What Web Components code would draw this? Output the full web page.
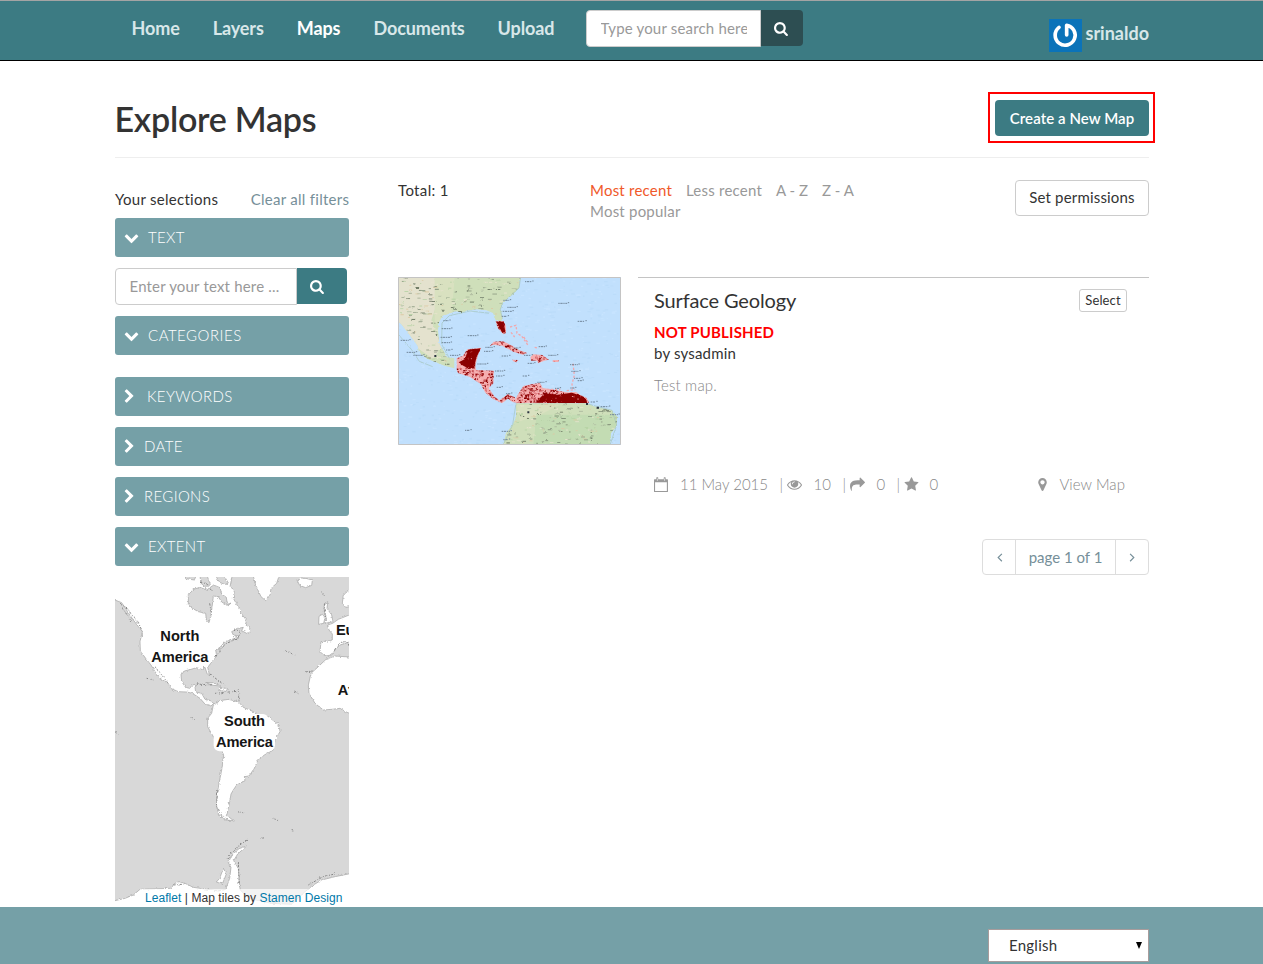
<!DOCTYPE html>
<html lang="en"><head><meta charset="utf-8"><title>Explore Maps</title>
<style>body{margin:0;background:#fff;font:15px/21px Lato,"Liberation Sans",sans-serif;color:#333;letter-spacing:.18px}</style></head>
<body><geo-app></geo-app>
<script>
const define=(name,html,after)=>customElements.define(name,class extends HTMLElement{
  connectedCallback(){
    if(this.shadowRoot)return;
    const t=document.createElement('template');
    t.innerHTML=typeof html==='function'?html(this):html;
    this.attachShadow({mode:'open'}).append(t.content.cloneNode(true));
    if(after)after(this.shadowRoot);
  }
});
const ICONS={
 search:'M1152 832q0-185-131.5-316.5t-316.5-131.5-316.5 131.5-131.5 316.5 131.5 316.5 316.5 131.5 316.5-131.5 131.5-316.5zm512 832q0 52-38 90t-90 38q-54 0-90-38l-343-342q-179 124-399 124-143 0-273.5-55.5t-225-150-150-225-55.5-273.5 55.5-273.5 150-225 225-150 273.5-55.5 273.5 55.5 225 150 150 225 55.5 273.5q0 220-124 399l343 343q37 37 37 90z',
 down:'M1683 808l-742 741q-19 19-45 19t-45-19l-742-741q-19-19-19-45.5t19-45.5l166-165q19-19 45-19t45 19l531 531 531-531q19-19 45-19t45 19l166 165q19 19 19 45.5t-19 45.5z',
 right:'M1107 877l-742 742q-19 19-45 19t-45-19l-166-166q-19-19-19-45t19-45l531-531-531-531q-19-19-19-45t19-45l166-166q19-19 45-19t45 19l742 742q19 19 19 45t-19 45z',
 eye:'M1664 960q-152-236-381-353 61 104 61 225 0 185-131.5 316.5t-316.5 131.5-316.5-131.5-131.5-316.5q0-121 61-225-229 117-381 353 133 205 333.5 326.5t434.5 121.5 434.5-121.5 333.5-326.5zm-720-384q0-20-14-34t-34-14q-125 0-214.5 89.5t-89.5 214.5q0 20 14 34t34 14 34-14 14-34q0-86 61-147t147-61q20 0 34-14t14-34zm848 384q0 34-20 69-140 230-376.5 368.5t-499.5 138.5-499.5-139-376.5-368q-20-35-20-69t20-69q140-229 376.5-368t499.5-139 499.5 139 376.5 368q20 35 20 69z',
 share:'M1792 640q0 26-19 45l-512 512q-19 19-45 19t-45-19-19-45v-256h-224q-98 0-175.5 6t-154 21.5-133 42.5-105.5 69.5-80 101-48.5 138.5-17.5 181q0 55 5 123 0 6 2.5 23.5t2.5 26.5q0 15-8.5 25t-23.5 10q-16 0-28-17-7-9-13-22t-13.5-30-10.5-24q-127-285-127-451 0-199 53-333 162-403 875-403h224v-256q0-26 19-45t45-19 45 19l512 512q19 19 19 45z',
 star:'M1728 647q0 22-26 48l-363 354 86 500q1 7 1 20 0 21-10.5 35.5t-30.5 14.5q-19 0-40-12l-449-236-449 236q-22 12-40 12-21 0-31.5-14.5t-10.5-35.5q0-6 2-20l86-500-364-354q-25-27-25-48 0-37 56-46l502-73 225-455q19-41 49-41t49 41l225 455 502 73q56 9 56 46z',
 pin:'M1152 640q0-106-75-181t-181-75-181 75-75 181 75 181 181 75 181-75 75-181zm256 0q0 109-33 179l-364 774q-16 33-47.5 52t-67.5 19-67.5-19-46.5-52l-365-774q-33-70-33-179 0-212 150-362t362-150 362 150 150 362z',
 calendar:'M64 256h210V100q0-60 60-60h110q60 0 60 60v156h660V100q0-60 60-60h110q60 0 60 60v156h210q64 0 64 64v1408q0 64-64 64H64q-64 0-64-64V320q0-64 64-64zM128 640v1024h1408V640zM350 170v280h80V170zM1240 170v280h80V170z',
 prev:'M1130 420L640 900l490 490 100-100-390-390 390-380z',
 next:'M660 420l490 480-490 490-100-100 390-390-390-380z'
};
define('fa-icon',el=>`<style>:host{display:inline-block;flex:none;width:15px;height:15px}svg{display:block;width:100%;height:100%;overflow:visible}</style><svg viewBox="0 0 1792 1792"><path fill="currentColor" fill-rule="${el.getAttribute('name')==='calendar'?'evenodd':'nonzero'}" d="${ICONS[el.getAttribute('name')]}"/></svg>`);

define('nav-link',el=>`<style>:host{display:block;font-weight:700;font-size:18px;line-height:21px;letter-spacing:-.1px;color:${el.hasAttribute('active')?'#fff':'#d8e7e9'}}</style><slot></slot>`);

define('search-box',`<style>:host{display:flex;align-items:flex-start}
.in{box-sizing:border-box;width:var(--in,175px);height:37px;border:1px solid #ccc;border-radius:4px 0 0 4px;background:#fff;color:#999;padding:7px 13px 7px 13.5px;line-height:21px;white-space:nowrap}
.clip{overflow:hidden;height:21px}
.b{width:var(--bw,42px);height:36px;box-sizing:border-box;background:var(--bg,#2d4e52);color:#fff;border-radius:0 4px 4px 0;padding:10px 0 0 13px}</style>
<div class="in"><div class="clip"><slot></slot></div></div><div class="b"><fa-icon name="search"></fa-icon></div>`);

define('user-badge',`<style>:host{display:flex;color:#d8e7e9;font-weight:700;font-size:18px}svg{display:block;margin-right:3px}span{padding-top:4px;letter-spacing:0}</style>
<svg width="33" height="33" viewBox="0 0 99 99"><path fill="#0b73b9" d="M0 0h99v99H0z"/><path d="M30 25A30 30 0 1 0 53 19V48" fill="none" stroke="#fff" stroke-width="11" stroke-linecap="round" stroke-linejoin="round"/></svg><span><slot></slot></span>`);

define('site-header',`<style>:host{display:block;box-sizing:border-box;height:61px;background:#3c7b83;border-top:1px solid #a4a4a4;border-bottom:1px solid #000}
.row{width:1017.5px;margin:0 114px 0 131.5px;display:flex;align-items:flex-start}
nav{display:flex;gap:33px;padding-top:17px;width:454.5px}
search-box{margin:9px 0 0 0}user-badge{margin:18px 0 0 auto}</style>
<div class="row"><nav><nav-link>Home</nav-link><nav-link>Layers</nav-link><nav-link active>Maps</nav-link><nav-link>Documents</nav-link><nav-link>Upload</nav-link></nav>
<search-box>Type your search here</search-box><user-badge>srinaldo</user-badge></div>`);

define('page-title',`<style>:host{display:flex;justify-content:space-between;align-items:flex-start;box-sizing:border-box;height:97px;border-bottom:1px solid #eee;padding-top:31px}
h1{margin:8px 0 0 -.5px;font-size:34px;line-height:37px;font-weight:600;letter-spacing:-.24px}
.mark{border:2px solid #f00;padding:6px 4px 5px 5px;margin-right:-6px}
button{display:block;width:154px;height:36px;border:0;border-radius:4px;background:#3c7b83;color:#fff;font:600 15px/21px Lato,sans-serif;letter-spacing:.07px;padding:0;white-space:nowrap}</style>
<h1>Explore Maps</h1><div class="mark"><button>Create a New Map</button></div>`);

define('filter-head',el=>`<style>:host{display:flex;align-items:center;box-sizing:border-box;height:39px;border-radius:3px;background:#75a0a7;color:#fff;padding-left:9px;font-weight:300;letter-spacing:${el.getAttribute('ls')||.35}px}
fa-icon{margin-right:${el.getAttribute('gap')}px}</style><fa-icon name="${el.getAttribute('icon')}"></fa-icon><span><slot></slot></span>`);

define('extent-map',`<style>:host{display:block;position:relative;height:330px}svg{display:block}
.a{position:absolute;right:0;bottom:0;box-sizing:border-box;width:209px;height:18px;padding-left:5px;background:rgba(255,255,255,.7);font:12px/18px "Liberation Sans",sans-serif;letter-spacing:.06px;color:#333;white-space:nowrap}.a b{font-weight:400;color:#0078a8}</style>
<svg width="234" height="330" viewBox="30 21 702 990"><defs><filter id="r" x="-5%" y="-5%" width="110%" height="110%"><feTurbulence type="fractalNoise" baseFrequency=".12" numOctaves="3" seed="4"/><feDisplacementMap in="SourceGraphic" scale="9" xChannelSelector="R" yChannelSelector="G"/></filter></defs>
<path fill="#d8d8d8" d="M30 21h702v990H30z"/>
<g filter="url(#r)" fill="#fff" stroke="#a0a0a0" stroke-width="2" stroke-linejoin="round">
<path d="M0 0V80L30 90 50 98 68 125 85 150 112 185 105 215 106 243 122 265 138 285 150 305 165 325 190 340 197 355 220 365 245 366 262 370 285 385 300 402 318 408 326 400 316 392 300 388 290 370 272 366 270 352 278 342 262 345 254 355 242 352 230 335 228 315 238 303 258 298 275 293 290 298 300 292 306 310 314 318 308 292 325 270 335 258 332 240 345 232 360 215 378 208 392 206 404 198 385 195 380 185 400 175 415 172 410 182 425 190 438 185 432 170 422 165 424 150 412 135 400 112 385 85 388 60 375 50 385 0z"/>
<path fill="#d8d8d8" d="M250 75L265 58 285 52 305 60 326 45 345 53 350 72 364 82 366 96 378 100 366 106 350 96 340 80 325 78 322 105 318 135 312 158 304 150 302 130 280 125 262 115 250 105zM285 15l22 4 8 22-12 12-16-14zM330 15h26l14 24-8 6-18-8zM240 12l34 4-6 14-26-4z"/>
<path d="M440 0L452 45 468 80 482 92 495 75 498 55 515 40 528 0z"/><path d="M576 30L590 24 606 26 622 30 620 46 602 53 584 46z"/>
<path d="M657 105L668 98 666 115 680 135 684 155 660 160 664 145 658 125zM642 139L652 133 660 142 656 160 641 163z"/>
<path d="M745 50L715 75 712 100 722 112 745 108zM745 130L700 148 683 160 668 165 672 180 682 192 682 212 648 215 645 245 660 258 680 255 690 240 705 225 745 212z"/>
<path d="M663 268L690 258 745 262V435L722 425 705 415 680 418 655 420 630 400 612 370 610 345 618 310 640 290z"/>
<path d="M325 405L345 392 370 388 400 395 415 412 445 425 460 437 490 440 522 465 525 485 510 510 505 540 478 555 458 572 448 595 432 618 418 620 420 632 395 645 385 660 378 672 375 690 370 715 365 735 385 752 362 750 342 738 335 710 335 680 342 640 350 600 356 555 345 530 325 500 308 470 308 445 320 430z"/>
<path d="M302 338L325 338 347 348 325 346zM345 352L368 356 362 364 342 360z"/>
<path d="M0 1030V994L30 992 60 985 85 975 105 958 200 955 206 942 222 935 240 940 265 952 300 957 340 963 362 958 374 925 378 892 370 878 380 856 402 836 425 828 398 852 386 872 400 895 402 930 406 960 430 985 500 1000 560 1003 600 965 625 945 650 930 690 920 750 908V1030zM355 895L364 912 352 942 334 936 344 925z"/>
</g><g fill="none" stroke="#858585" stroke-width="3" stroke-dasharray="7 5 3 4" filter="url(#r)">
<path d="M45 102l22 12 11 18 20 22 14 30M51 112l30 45M148 288l28 34 13 18M315 312l28 22 18 12M276 342l47 3M339 660l-5 48 14 26 26 20M366 867l16-22 22-20 24-16M400 876l3 70M384 177l24 8-8 17-15-2M332 260l28-38 42-18M285 37l20 4 16 23M314 100l6 36M688 240l16-22 20-4 10 15M658 100l2 34 4 22M400 358l2 36M539 242l35 14M600 306l23-3M568 363l12 8M257 443l14 8M400 725l16 4M506 745l15 8M470 803l6 2M560 782l5 1M610 945l44-25 40-9M205 945l35-3M330 370l65-6M125 325l20 5M650 65l8 12M30 485l10 8"/></g>
<g fill="#fff"><rect x="136" y="240" width="180" height="44" rx="16"/><rect x="350" y="432" width="140" height="46" rx="16"/><rect x="326" y="490" width="184" height="54" rx="18"/></g>
<g font-family="Liberation Sans" font-weight="700" font-size="44" text-anchor="middle" fill="#151515" letter-spacing="-1"><text x="224" y="212" textLength="116">North</text><text x="224" y="275" textLength="170">America</text><text x="418" y="469" textLength="122">South</text><text x="418" y="532" textLength="170">America</text><text x="693" y="195" text-anchor="start">Eu</text><text x="698" y="374" text-anchor="start">Af</text></g></svg>
<div class="a"><b>Leaflet</b> | Map tiles by <b>Stamen Design</b></div>`);

define('filter-panel',`<style>:host{display:flex;flex-direction:column;width:234px;gap:11px;padding-top:31px}
.top{display:flex;justify-content:space-between;margin-bottom:-3px;letter-spacing:.28px}.top span:last-child{color:#768f99;margin-right:-.3px}
search-box{--in:182px;--bw:50px;--bg:#3c7b83}.gap{margin-bottom:11px}</style>
<div class="top"><span>Your selections</span><span>Clear all filters</span></div>
<filter-head icon="down" gap="9">TEXT</filter-head><search-box>Enter your text here ...</search-box>
<filter-head class="gap" icon="down" gap="9" ls=".5">CATEGORIES</filter-head><filter-head icon="right" gap="8">KEYWORDS</filter-head><filter-head icon="right" gap="5">DATE</filter-head><filter-head icon="right" gap="5">REGIONS</filter-head><filter-head icon="down" gap="9">EXTENT</filter-head><extent-map></extent-map>`);

define('map-thumb',`<style>:host{display:block;width:223px;height:168px}svg{display:block}</style>
<svg width="223" height="168" viewBox="24 27 669 504"><defs>
<filter id="r"><feTurbulence type="fractalNoise" baseFrequency=".15" numOctaves="2" seed="8"/><feDisplacementMap in="SourceGraphic" scale="7" xChannelSelector="R" yChannelSelector="G"/></filter>
<clipPath id="land"><path d="M24 27H392l-5 33-20 20-28 24-8 20 6 28-4 9-16-4-8-22-20-8-30-3-30 4-12 5-20-3-40 14-10 18-3 24 4 42 15 24 8 16 22 3v30l-30-8-50-20-26-20-4-20-30-40-20-26-17-12zM378 406H590l28 11 48 10 16 20-3 28-16 20-4 36H340l8-36 20-24 10-24z"/></clipPath>
<clipPath id="geo"><path d="M317 160l24-1 7 16 0 20-8 4-17-19zM232 244l42-5-10 22-8 32 2 13 54 2-2 38-14 14 18 26 14 11 26-19 20 10 10 17-16-3-14-10-18 14-28-14-22-18-14-26-32-21-36-12-12-25 2-18 24-8zM299 235l12-14 28-1 28 13 20 13 25 9-14 5-28-9-34-18-26-3zM421 268l8-9 28 2 20 14-14 3-18 8-4-8-18 0zM367 275l18 1-6 7-10-3zM489 277l18-1-2 6-14 0zM378 390l8-14 14-22 28-6 22-3 8 15 38 6 34 7 28-1 12 8 20 10 8 16H378z"/></clipPath></defs>
<path fill="#c1e0fd" d="M24 27h669v504H24z"/><g id="sea"></g>
<g filter="url(#r)"><g clip-path="url(#land)"><path fill="#cfdfba" d="M24 27h669v504H24z"/><path fill="#e4e2ce" d="M24 27h110l10 70-20 60 30 80-24 36L24 200z"/><path fill="#d9e1c0" d="M134 27h60l-10 120-50 20zM380 410h130l-60 30-60 20z"/><path fill="#c3dcb3" d="M440 440h240v90H430z"/><g id="labels"></g></g>
<path d="M392 27l-5 33-48 44-8 20 6 28M300 136l-60-7-62 14-22 22-1 64 23 42M378 406l-10 64-28 60M590 407l76 20 14 44-20 60M24 198l40 46 24 36 40 16" fill="none" stroke="#a3c4bb" stroke-width="2"/></g>
<g clip-path="url(#geo)" filter="url(#r)"><path fill="#f5adaf" d="M200 150h410v260H200z"/><g id="rock"></g><path fill="#8b0000" d="M234 245l38-4-13 28-7 32-14 2-18-10-14-10 19-10zM319 162l22-1 5 30-9 4zM436 404l28-28 38 4 44-6 40 14 6 18z"/><g id="vein"></g></g>
<path d="M360 177l18-5 3 24 14 8 20 29M363 193l11 14M401 207l13 17M549 287l4 35-7 26 2 14M488 279l14 0M434 238l12 3M430 350l10 0M471 364h40M530 368l26-3" fill="none" stroke="#f0a8ae" stroke-width="4" stroke-dasharray="7 5"/><g id="dots"></g>
<path d="M25.5 28.5h666v501h-666z" fill="none" stroke="#c4c4c4" stroke-width="3"/></svg>`,root=>{
 let seed=7;const rnd=()=>(seed=(seed*16807)%2147483647)/2147483647;
 const speck=(id,n,colors,x,y,w,h,minW,maxW,maxH)=>{let s='';for(let i=0;i<n;i++)s+=`<rect x="${(x+rnd()*w).toFixed(1)}" y="${(y+rnd()*h).toFixed(1)}" width="${(minW+rnd()*(maxW-minW)).toFixed(1)}" height="${(2+rnd()*(maxH-2)).toFixed(1)}" fill="${colors[Math.floor(rnd()*colors.length)]}"/>`;root.getElementById(id).innerHTML=s};
 speck('sea',900,['#bbdcfa','#c8e4ff'],24,27,669,504,3,12,5);
 speck('labels',1300,['#7f8b76','#98a58c','#b0bda1','#68745f','#e9e4cf','#b5d2a3','#dcc9a4'],24,27,669,504,3,14,3);
 speck('rock',2300,['#8b0000','#9b1016','#8b0000','#b83c40','#f8bcbc','#d9686c'],200,150,400,260,3,7,6);
 speck('vein',380,['#e59a9d','#c2474b','#a51c20'],200,150,400,260,2,5,4);
 let s='';[[415,41],[350,97],[362,118],[348,130],[345,145],[170,158],[165,182],[162,208],[165,224],[178,246],[190,262],[60,253],[80,262],[42,217],[515,106],[573,160],[243,203],[296,238],[292,250],[380,240],[412,262],[456,236],[485,262],[345,264],[272,288],[325,309],[328,324],[330,358],[408,324],[452,343],[550,290],[554,310],[562,331],[573,338],[551,360],[505,361],[612,402],[642,416],[670,440],[235,487],[358,377],[345,490],[350,515],[423,286]].forEach(([x,y])=>s+=`<path d="M${x-10} ${y}h${12+rnd()*16}m2 -2h4" stroke="#71869a" stroke-width="3" stroke-dasharray="4 2 7 2"/>`);
 root.getElementById('dots').innerHTML=s+'<path d="M133 261h6v6h-6zM412 430h6v6h-6zM588 405h6v6h-6zM620 416h7v6h-7z" fill="#2d3440"/>';
});

define('map-card',`<style>:host{display:flex;gap:17px}
article{flex:1;box-sizing:border-box;height:222px;border-top:1px solid #c4c4c4;padding:11px 24px 0 16px;display:flex;flex-direction:column}
.h{display:flex;justify-content:space-between;align-items:flex-start}h2{margin:0 0 2px;font-size:20px;line-height:22px;font-weight:400;letter-spacing:-.13px}
.s{box-sizing:border-box;width:48px;height:23px;border:1px solid #ccc;border-radius:3px;font-size:13px;line-height:21px;letter-spacing:.1px;text-align:center;margin-right:-2px}
.n{margin-top:9px;color:#f00;font-weight:700}.d{margin-top:11px;font-weight:300;color:#888}
.m{margin-top:auto;margin-bottom:4px;display:flex;font-weight:300;color:#888;align-items:center;white-space:pre;letter-spacing:0}.m fa-icon{color:#999}.m>span:last-child{margin-left:9px;letter-spacing:.06px}</style><map-thumb></map-thumb><article><div class="h"><h2>Surface Geology</h2><div class="s">Select</div></div><div class="n">NOT PUBLISHED</div><div>by sysadmin</div><div class="d">Test map.</div>
<div class="m"><fa-icon name="calendar"></fa-icon><span style="width:99.5px;margin-left:11px">11 May 2015</span><span style="width:7px">|</span><fa-icon name="eye"></fa-icon><span style="width:29px;margin-left:12px">10</span><span style="width:7px">|</span><fa-icon name="share"></fa-icon><span style="width:20px;margin-left:12px">0</span><span style="width:7px">|</span><fa-icon name="star"></fa-icon><span style="margin-left:11px">0</span><fa-icon name="pin" style="margin-left:auto"></fa-icon><span>View Map</span></div></article>`);

define('page-nav',`<style>:host{display:flex;box-sizing:border-box;width:167px;height:36px;border:1px solid #ddd;border-radius:4px;color:#768f99;line-height:35px;letter-spacing:0}
div{display:flex;align-items:center;justify-content:center;width:32px}.p{width:99px;border:solid #ddd;border-width:0 1px}</style><div><fa-icon name="prev"></fa-icon></div><div class="p">page 1 of 1</div><div><fa-icon name="next"></fa-icon></div>`);

define('map-results',`<style>:host{display:flex;flex-direction:column;width:751px;padding-top:22px}
.bar{display:flex;height:97px;align-items:flex-start}.t{width:192px;letter-spacing:.35px}.sort{width:290px;display:flex;flex-wrap:wrap;column-gap:14px;color:#999;letter-spacing:.22px}.sort b{font-weight:400;color:#f0592a}.z{letter-spacing:0}
.p{margin-left:auto;box-sizing:border-box;width:134px;height:36px;border:1px solid #ccc;border-radius:4px;text-align:center;line-height:33px}
page-nav{margin:40px 0 0 auto}</style>
<div class="bar"><div class="t">Total: 1</div><div class="sort"><b>Most recent</b><span>Less recent</span><span class="z">A - Z</span><span class="z">Z - A</span><span>Most popular</span></div><div class="p">Set permissions</div></div><map-card></map-card><page-nav></page-nav>`);

define('site-footer',`<style>:host{display:block;box-sizing:border-box;height:57px;background:#75a0a7;padding:22px 114px 0 0}
div{box-sizing:border-box;width:161px;height:33px;margin-left:auto;border:1px solid #a89c9c;background:#fff;padding:0 6px 0 20px;display:flex;align-items:center;justify-content:space-between;letter-spacing:.25px}</style><div><span>English</span><svg width="6" height="7" viewBox="0 0 6 7"><path d="M0 0h6L3 7z"/></svg></div>`);

define('geo-app',`<style>:host{display:block;height:964px;overflow:hidden}main{width:1034px;height:846px;margin-left:115px}.cols{display:flex;justify-content:space-between}</style>
<site-header></site-header><main><page-title></page-title><div class="cols"><filter-panel></filter-panel><map-results></map-results></div></main><site-footer></site-footer>`);
</script></body></html>
